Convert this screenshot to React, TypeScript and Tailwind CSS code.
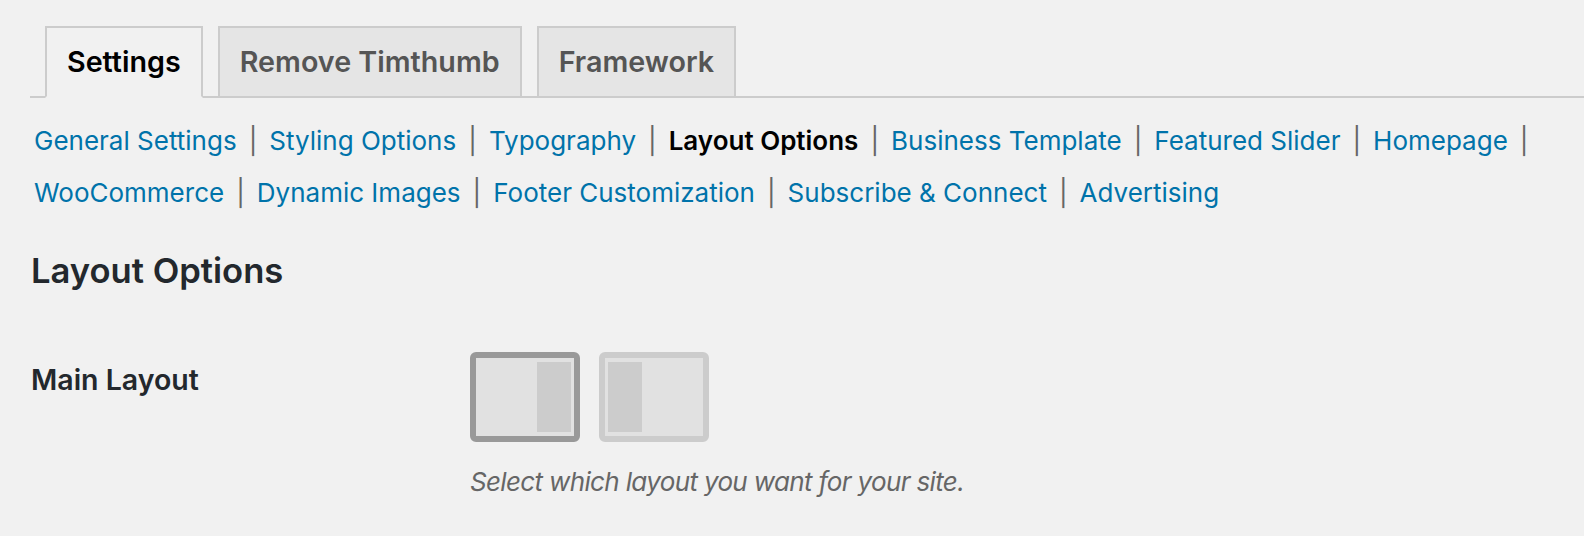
const tabs = [
  { label: "Settings", active: true },
  { label: "Remove Timthumb", active: false },
  { label: "Framework", active: false },
];

const sections = [
  "General Settings",
  "Styling Options",
  "Typography",
  "Layout Options",
  "Business Template",
  "Featured Slider",
  "Homepage",
  "WooCommerce",
  "Dynamic Images",
  "Footer Customization",
  "Subscribe & Connect",
  "Advertising",
];

const current = "Layout Options";

const LayoutChoice = ({ side, selected }: { side: "left" | "right"; selected: boolean }) => (
  <div
    className={`w-[110px] h-[90px] border-[6px] rounded-[6px] bg-[#e1e1e1] flex py-[4px] ${
      side === "right" ? "justify-end pr-[3px]" : "justify-start pl-[3px]"
    } ${selected ? "border-[#999]" : "border-[#ccc]"}`}
  >
    <div className="w-[34px] h-full bg-[#ccc]" />
  </div>
);

export default function App() {
  return (
    <div
      className="w-full h-[536px] bg-[#f1f1f1] pl-[30px] pt-[26px] overflow-hidden"
      style={{ fontFamily: "Inter, 'Noto Sans', sans-serif" }}
    >
      {/* tabs */}
      <div className="flex border-b-2 border-[#ccc] pl-[15px] gap-[15px]">
        {tabs.map((t) => (
          <div
            key={t.label}
            className={`h-[72px] -mb-[2px] border-2 border-[#ccc] px-[20px] flex items-center text-[28.7px] font-semibold ${
              t.active ? "bg-[#f1f1f1] text-black border-b-[#f1f1f1]" : "bg-[#e5e5e5] text-[#555]"
            }`}
          >
            {t.label}
          </div>
        ))}
      </div>

      {/* sub navigation */}
      <ul className="flex flex-wrap mt-[17px] text-[26px] leading-[52px] pl-[4px] max-w-[1530px]">
        {sections.map((s, i) => (
          <li key={s} className="flex items-center">
            {s === current ? (
              <span className="font-semibold text-black">{s}</span>
            ) : (
              <a className="text-[#0073aa]">{s}</a>
            )}
            {i < sections.length - 1 && <span className="text-[#666] mx-[12px]">|</span>}
          </li>
        ))}
      </ul>

      {/* heading */}
      <h2 className="mt-[31px] text-[34.6px] leading-[40px] font-semibold text-[#23282d] pl-[1px]">
        Layout Options
      </h2>

      {/* form row */}
      <div className="flex mt-[62px]">
        <div className="w-[440px] pt-[12px] pl-[1px] text-[28.5px] leading-[32px] font-semibold text-[#23282d]">
          Main Layout
        </div>
        <div>
          <div className="flex gap-[19px]">
            <LayoutChoice side="right" selected />
            <LayoutChoice side="left" selected={false} />
          </div>
          <p className="mt-[22px] text-[26px] leading-[36px] italic tracking-[-0.65px] text-[#666]">
            Select which layout you want for your site.
          </p>
        </div>
      </div>
    </div>
  );
}
